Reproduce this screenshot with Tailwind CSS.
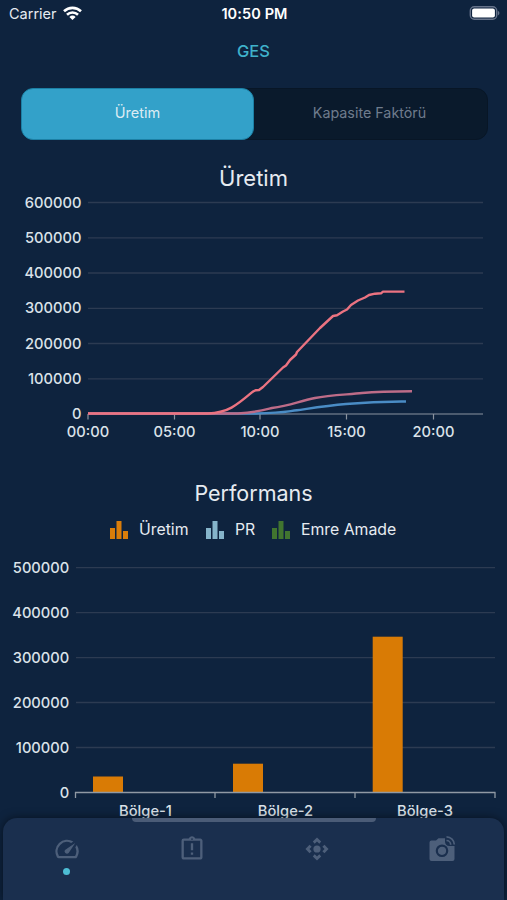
<!DOCTYPE html>
<html lang="tr">
<head>
  <meta charset="UTF-8">
  <meta name="viewport" content="width=device-width, initial-scale=1.0">
  <title>GES</title>
  <script src="https://cdn.jsdelivr.net/npm/@tailwindcss/browser@4"></script>
</head>
<body class="relative h-[900px] overflow-hidden bg-[#0e233e] font-['Inter',sans-serif] text-[#e6ebf1]">

  <!-- Status bar -->
  <div class="grid h-7 grid-cols-3 items-center pl-[9px] pr-[7px]">
    <div class="flex items-center gap-[6px] text-[14.5px]">
      <span>Carrier</span>
      <svg class="-mt-[2px] h-[14px] w-[19px]" viewBox="0 0 19 14" fill="none" stroke="#fff" stroke-width="2.6">
        <path d="M1 5.3a12.2 12.2 0 0 1 17 0"/>
        <path d="M4 8.7a7.9 7.9 0 0 1 11 0"/>
        <path d="M9.5 14 6.4 10.9a4.4 4.4 0 0 1 6.2 0z" fill="#fff" stroke="none"/>
      </svg>
    </div>
    <div class="text-center text-[14.5px] font-semibold tracking-[0.1px] text-white">10:50 PM</div>
    <svg class="-mt-[2px] h-[14px] w-[31px] justify-self-end" viewBox="0 0 31 14">
      <rect x="1.3" y="0.8" width="26.4" height="12.4" rx="4" fill="none" stroke="#66738a" stroke-width="1.4"/>
      <rect x="3.1" y="2.4" width="22.8" height="9.2" rx="2" fill="#fff"/>
      <path d="M28.9 4.8a2.5 2.5 0 0 1 0 4.6z" fill="#66738a"/>
    </svg>
  </div>

  <h1 class="flex h-[46px] items-center justify-center text-[16.5px] font-medium text-[#3fb2cb]">GES</h1>

  <!-- Tabs -->
  <div class="ml-[21px] mt-[14px] flex h-[52px] w-[467px] rounded-xl border border-[#081626] bg-[#0a1a2c] text-[14.5px]">
    <button class="-my-px -ml-px w-[233px] rounded-xl border border-[#1c80a5] bg-[#33a1c9] pb-[2px] text-[#dcecf4]">Üretim</button>
    <button class="flex-1 pb-[2px] pr-[2px] text-[14.3px] text-[#6f7c8d]">Kapasite Faktörü</button>
  </div>

  <!-- Line chart -->
  <section>
    <h2 class="mt-[22px] text-center text-[22px] leading-8">Üretim</h2>
    <svg class="block h-[256px] w-[507px]" viewBox="0 194 507 256" font-size="14.7" font-weight="450">
      <path d="M88 202.5H483M88 237.8H483M88 273H483M88 308.3H483M88 343.5H483M88 378.8H483" stroke="#2c3b52" stroke-width="1.3"/>
      <path d="M88 414H483M88 414v5.5M174.5 414v5.5M260 414v5.5M346.5 414v5.5M433.5 414v5.5" stroke="#8a939f" stroke-width="1.2"/>
      <g text-anchor="end" fill="#dbe2e9">
        <text x="81.5" y="207.5">600000</text>
        <text x="81.5" y="242.8">500000</text>
        <text x="81.5" y="278">400000</text>
        <text x="81.5" y="313.3">300000</text>
        <text x="81.5" y="348.5">200000</text>
        <text x="81.5" y="383.8">100000</text>
        <text x="81.5" y="419">0</text>
      </g>
      <g text-anchor="middle" fill="#dbe2e9">
        <text x="88" y="437">00:00</text>
        <text x="174.5" y="437">05:00</text>
        <text x="260" y="437">10:00</text>
        <text x="346.5" y="437">15:00</text>
        <text x="433.5" y="437">20:00</text>
      </g>
      <g fill="none" stroke-width="2.4" stroke-linejoin="round">
        <path d="M88 413.5H256C282 413 284 412 297 410.3C316 407.5 328 405.5 346 404C362 402.5 378 401.3 406 401.5" stroke="#4a8cc5"/>
        <path d="M88 413.5H238C256 412.5 264 410 272 408C290 406 298 401.5 315 398C330 395 350 394.5 362 393C378 391.5 385 391.3 412 391.3" stroke="#bd6c88"/>
        <path d="M88 413.5H208C228 413 237 405 253 391.5L256 390.2L259 390L263 387L283 367.5L286 365.5L290 360L296 354.5L297 352L320 328L333 316L337 315.3L343 311.5L347 309.5L351 305L358 300.5L365 297.5L369 295L375 293.7L381 293.3L383 291.6H404.5" stroke="#eb7381"/>
      </g>
    </svg>
  </section>

  <!-- Bar chart -->
  <section>
    <h2 class="mt-[27px] text-center text-[21.5px] leading-8">Performans</h2>
    <div class="mt-[9px] flex h-6 items-center pl-[110px] text-[15.8px]">
      <svg class="mr-[11px] h-[18px] w-[18px]" viewBox="0 0 18 18" fill="#d97d0a"><path d="M0 7h5v11H0zM6.5 0h5v18h-5zM13 10h5v8h-5z"/></svg>
      <span class="w-[67px]">Üretim</span>
      <svg class="mr-[11px] h-[18px] w-[18px]" viewBox="0 0 18 18" fill="#85b4ca"><path d="M0 7h5v11H0zM6.5 0h5v18h-5zM13 10h5v8h-5z"/></svg>
      <span class="w-[37px]">PR</span>
      <svg class="mr-[11px] h-[18px] w-[18px]" viewBox="0 0 18 18" fill="#41752f"><path d="M0 7h5v11H0zM6.5 0h5v18h-5zM13 10h5v8h-5z"/></svg>
      <span>Emre Amade</span>
    </div>
    <svg class="block h-[280px] w-[507px]" viewBox="0 542 507 280" font-size="14.7" font-weight="450">
      <path d="M76 567.6H495M76 612.6H495M76 657.6H495M76 702.5H495M76 747.5H495" stroke="#2c3b52" stroke-width="1.3"/>
      <g fill="#d97b05">
        <rect x="93" y="776.5" width="30" height="16"/>
        <rect x="233" y="763.7" width="30" height="28.8"/>
        <rect x="372.7" y="636.7" width="30" height="155.8"/>
      </g>
      <path d="M75 792.5H495.5M75.5 792v6M215 792v6M355 792v6M495 792v6" fill="none" stroke="#9099a4" stroke-width="1.3"/>
      <g text-anchor="end" fill="#dbe2e9">
        <text x="69.3" y="572.8">500000</text>
        <text x="69.3" y="617.8">400000</text>
        <text x="69.3" y="662.8">300000</text>
        <text x="69.3" y="707.7">200000</text>
        <text x="69.3" y="752.7">100000</text>
        <text x="69.3" y="797.7">0</text>
      </g>
      <g text-anchor="middle" fill="#dbe2e9">
        <text x="145.5" y="815.7">Bölge-1</text>
        <text x="285.5" y="815.7">Bölge-2</text>
        <text x="425" y="815.7">Bölge-3</text>
      </g>
    </svg>
  </section>

  <!-- Bottom navigation -->
  <nav class="absolute bottom-0 left-[3px] h-[82px] w-[501px] rounded-t-[14px] bg-[#1a2f4e] shadow-[0_0_10px_rgba(0,0,0,0.5)]">
    <div class="mx-auto h-[4px] w-[244px] rounded-b-sm bg-[#4b5c77]"></div>
    <div class="grid grid-cols-4 justify-items-center pl-px pt-[13px] text-[#4d5f7a]">
      <a class="flex flex-col items-center gap-[5px]">
        <svg class="h-[28px] w-[28px]" viewBox="0 0 24 24" fill="currentColor">
          <path d="m20.38 8.57-1.23 1.85a8 8 0 0 1-.22 7.58H5.07A8 8 0 0 1 15.58 6.85l1.85-1.23A10 10 0 0 0 3.35 19a2 2 0 0 0 1.72 1h13.85a2 2 0 0 0 1.74-1 10 10 0 0 0-.27-10.44zm-9.79 6.84a2 2 0 0 0 2.83 0l5.66-8.49-8.49 5.66a2 2 0 0 0 0 2.83z"/>
        </svg>
        <span class="h-[6.5px] w-[6.5px] rounded-full bg-[#4dbdd4]"></span>
      </a>
      <a>
        <svg class="h-[28px] w-[28px]" viewBox="0 0 24 24" fill="currentColor">
          <path d="M11 15h2v2h-2zm0-8h2v6h-2zm8-4h-4.18C14.4 1.84 13.3 1 12 1s-2.4.84-2.82 2H5a2 2 0 0 0-2 2v14c0 1.1.9 2 2 2h14c1.1 0 2-.9 2-2V5c0-1.1-.9-2-2-2zm-7-.25a.75.75 0 1 1 0 1.5.75.75 0 0 1 0-1.5zM19 19H5V5h14z"/>
        </svg>
      </a>
      <a>
        <svg class="h-[28px] w-[28px]" viewBox="0 0 24 24" fill="currentColor">
          <circle cx="12" cy="12" r="3.1"/>
          <path d="m8.4 5.6 3.6-3.5 3.6 3.5L14 7.4l-2-1.9-2 1.9zM8.4 18.4l3.6 3.5 3.6-3.5L14 16.6l-2 1.9-2-1.9zM5.6 8.4 2.1 12l3.5 3.6L7.4 14l-1.9-2 1.9-2zM18.4 8.4l3.5 3.6-3.5 3.6-1.8-1.6 1.9-2-1.9-2z"/>
        </svg>
      </a>
      <a>
        <svg class="h-[28px] w-[28px]" viewBox="0 0 28 28" fill="none" stroke="currentColor">
          <path d="M3.5 5.5H8L10.5 3.3h6.5v3.2c0 2.7 1.8 4.5 4.5 4.5h5V24a2 2 0 0 1-2 2h-21a2 2 0 0 1-2-2V7.5a2 2 0 0 1 2-2z" fill="currentColor" stroke="none"/>
          <circle cx="14" cy="15.8" r="5.2" stroke="#1a2f4e" stroke-width="2.2"/>
          <path d="M18.5 1.8a7.8 7.8 0 0 1 7.8 7.8M18.5 5.5a4.2 4.2 0 0 1 4.2 4.2" stroke-width="1.7"/>
        </svg>
      </a>
    </div>
  </nav>

</body>
</html>
